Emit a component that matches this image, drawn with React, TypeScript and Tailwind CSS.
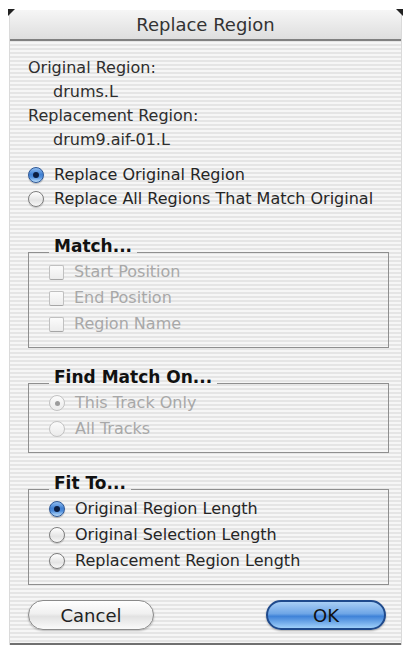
import React from "react";

const stripes =
  "bg-[repeating-linear-gradient(to_bottom,#f6f6f6_0px,#f6f6f6_2px,#e5e5e5_2px,#e5e5e5_4px)]";

// Aqua style radio button
const Radio = ({
  checked = false,
  disabled = false,
}: {
  checked?: boolean;
  disabled?: boolean;
}) => {
  if (disabled) {
    return (
      <span className="flex h-[16px] w-[16px] shrink-0 items-center justify-center rounded-full border border-[#c2c2c2] bg-[linear-gradient(to_bottom,#fbfbfb,#ebebeb)]">
        {checked && <span className="h-[5px] w-[5px] rounded-full bg-[#9c9c9c]" />}
      </span>
    );
  }
  if (checked) {
    return (
      <span className="flex h-[16px] w-[16px] shrink-0 items-center justify-center rounded-full border border-[#2d5796] bg-[linear-gradient(to_bottom,#8fbcef_0%,#3f7fd2_45%,#4f8edc_65%,#bfe0fb_100%)] shadow-[0_1px_1px_rgba(0,0,0,0.25)]">
        <span className="h-[6px] w-[6px] rounded-full bg-[#0b1d40]" />
      </span>
    );
  }
  return (
    <span className="h-[16px] w-[16px] shrink-0 rounded-full border border-[#7d7d7d] bg-[linear-gradient(to_bottom,#ffffff,#e4e4e4_60%,#f8f8f8)] shadow-[0_1px_1px_rgba(0,0,0,0.2)]" />
  );
};

const Checkbox = () => (
  <span className="h-[15px] w-[15px] shrink-0 rounded-[2px] border border-[#c0c0c0] border-b-[#a6a6a6] bg-[linear-gradient(to_bottom,#fbfbfb,#ececec)]" />
);

const Option = ({
  label,
  control,
  disabled = false,
}: {
  label: string;
  control: React.ReactNode;
  disabled?: boolean;
}) => (
  <div className="flex h-[26px] items-center gap-[10px]">
    {control}
    <span className={disabled ? "text-[#a8a8a8]" : "text-[#262626]"}>{label}</span>
  </div>
);

const Group = ({ title, children }: { title: string; children: React.ReactNode }) => (
  <fieldset className="m-0 w-[361px] border border-[#8f8f8f] px-[20px] pt-[3px] pb-[10px]">
    <legend className="flex h-[8px] items-end px-[5px]">
      <span className="text-[17px] leading-[20px] font-bold text-[#111]">{title}</span>
    </legend>
    {children}
  </fieldset>
);

export default function App() {
  return (
    <div className="relative h-[654px] w-[409px] overflow-hidden bg-white font-['DejaVu_Sans',sans-serif] text-[16px]">
      {/* corner marks */}
      <span className="absolute left-[8px] top-[9px] h-0 w-0 border-t-[7px] border-r-[7px] border-t-[#222] border-r-transparent" />
      <span className="absolute right-[6px] top-[9px] h-0 w-0 border-t-[7px] border-l-[7px] border-t-[#222] border-l-transparent" />

      <div className={`ml-[9px] mt-[10px] flex w-[393px] flex-col border-x border-[#dadada] ${stripes}`}>
        {/* title bar */}
        <div className="flex h-[31px] items-center justify-center border-b-2 border-[#808080] bg-[linear-gradient(to_bottom,#f6f6f6,#dedede)] text-[18px] text-[#333]">
          Replace Region
        </div>

        <div className="flex flex-col pl-[18px] pr-[14px] pt-[15px] pb-[13px] text-[#2e2e2e]">
          <div className="leading-[24px]">Original Region:</div>
          <div className="pl-[25px] leading-[24px]">drums.L</div>
          <div className="leading-[24px]">Replacement Region:</div>
          <div className="pl-[25px] leading-[24px]">drum9.aif-01.L</div>

          <div className="mt-[11px] flex flex-col">
            <div className="flex h-[24px] items-center gap-[10px]">
              <Radio checked />
              <span className="text-[#262626]">Replace Original Region</span>
            </div>
            <div className="flex h-[24px] items-center gap-[10px]">
              <Radio />
              <span className="text-[#262626]">Replace All Regions That Match Original</span>
            </div>
          </div>

          <div className="mt-[37px]">
            <Group title="Match...">
              <Option label="Start Position" control={<Checkbox />} disabled />
              <Option label="End Position" control={<Checkbox />} disabled />
              <Option label="Region Name" control={<Checkbox />} disabled />
            </Group>
          </div>

          <div className="mt-[31px]">
            <Group title="Find Match On...">
              <Option label="This Track Only" control={<Radio checked disabled />} disabled />
              <Option label="All Tracks" control={<Radio disabled />} disabled />
            </Group>
          </div>

          <div className="mt-[32px]">
            <Group title="Fit To...">
              <Option label="Original Region Length" control={<Radio checked />} />
              <Option label="Original Selection Length" control={<Radio />} />
              <Option label="Replacement Region Length" control={<Radio />} />
            </Group>
          </div>

          <div className="mt-[15px] flex items-center justify-between pr-[1px]">
            <button className="flex h-[30px] w-[126px] items-center justify-center rounded-full border border-[#8a8a8a] bg-[linear-gradient(to_bottom,#ffffff_0%,#f0f0f0_45%,#e2e2e2_55%,#fafafa_100%)] text-[18px] text-[#222] shadow-[0_1px_2px_rgba(0,0,0,0.25)]">
              Cancel
            </button>
            <button className="flex h-[30px] w-[120px] items-center justify-center rounded-full border-2 border-[#1f4a8c] bg-[linear-gradient(to_bottom,#a9cff5_0%,#6ea5e6_45%,#3f82d8_55%,#9fd0fa_100%)] text-[18px] text-[#111] shadow-[0_1px_2px_rgba(0,0,0,0.3)]">
              OK
            </button>
          </div>
        </div>
        <div className="h-[2px] bg-[#707070]" />
      </div>
    </div>
  );
}
